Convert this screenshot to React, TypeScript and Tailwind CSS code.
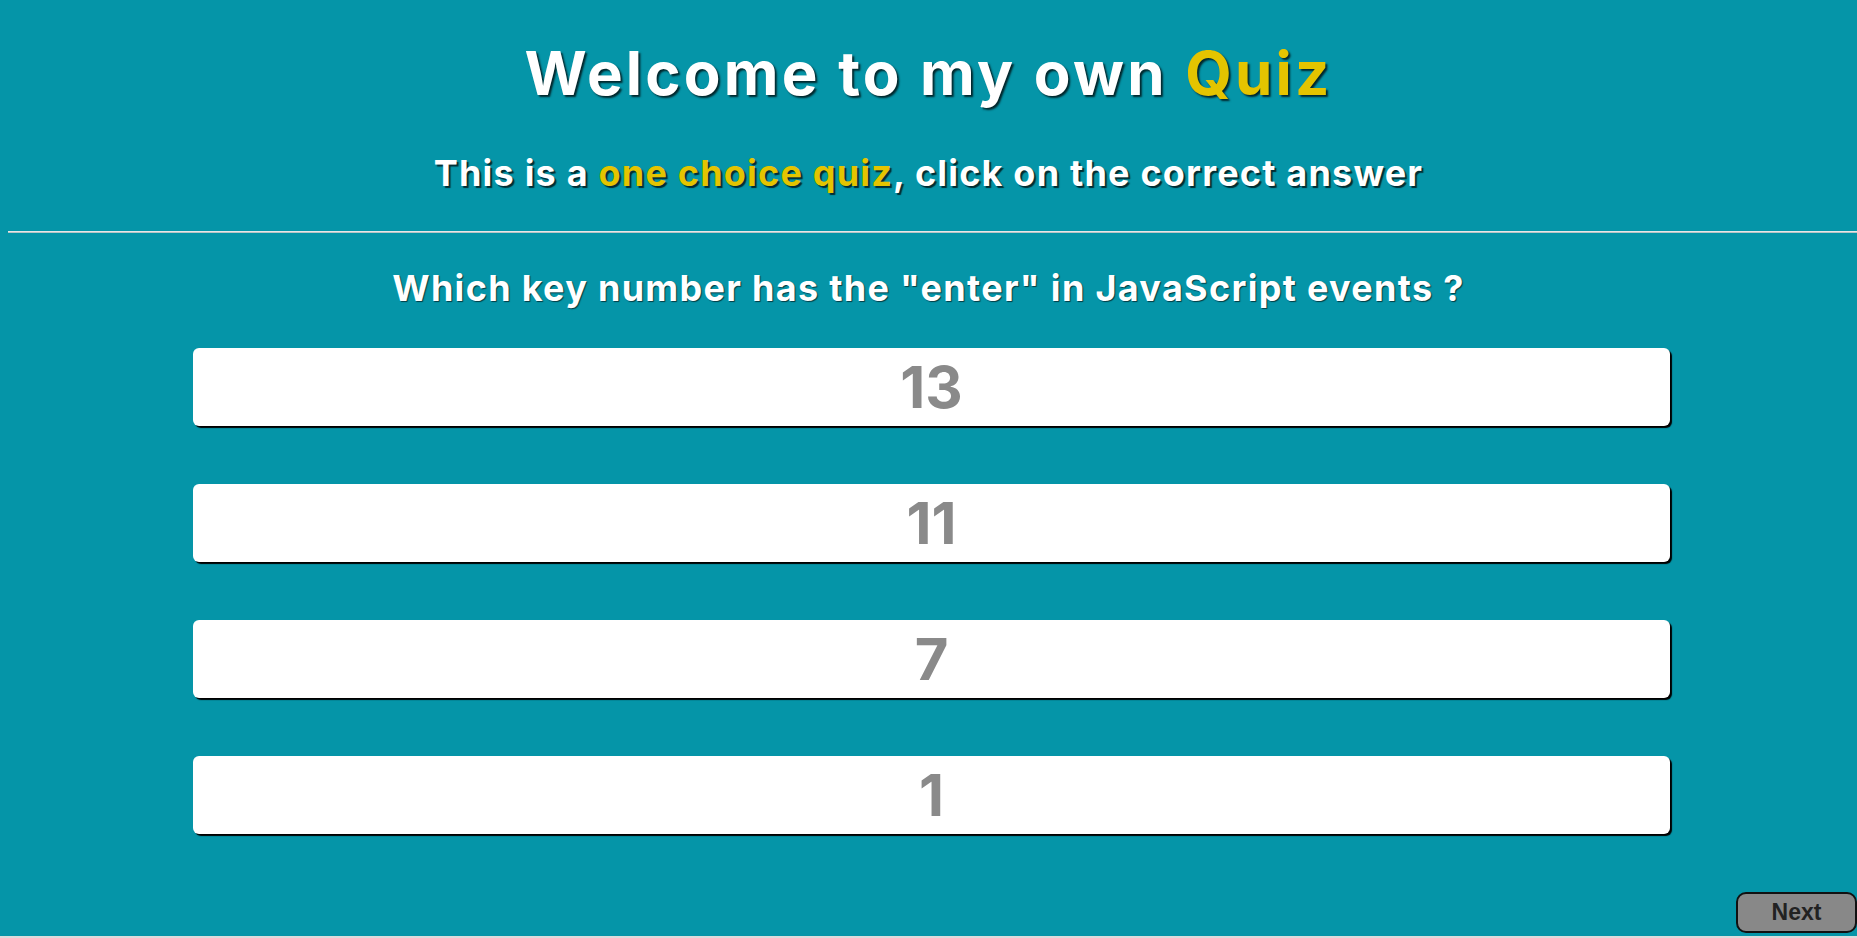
const answers = ['13', '11', '7', '1'];

export default function App() {
  return (
    <div className="w-[1857px] h-[938px] overflow-hidden bg-[#dcdcdc] font-['Inter','Open_Sans',sans-serif]">
      <div className="h-[936px] bg-[#0595a8] flex flex-col">
        <h1 className="mt-[43px] text-center text-[60px] leading-[60px] font-bold text-white tracking-[3.2px] [text-shadow:2px_2px_2px_rgba(0,0,0,0.75)]">
          Welcome to my own <span className="text-[#e4c400]">Quiz</span>
        </h1>
        <h2 className="mt-[52px] text-center text-[36px] leading-[36px] font-bold text-white tracking-[1.2px] [text-shadow:2px_2px_1px_rgba(0,0,0,0.7)]">
          This is a <span className="text-[#e4c400]">one choice quiz</span>, click on the correct answer
        </h2>
        <div className="mt-[40px] ml-2 h-[2px] border-t border-[#e8e8e8] bg-[#b8c4c6]" />
        <p className="mt-[37px] text-center text-[36px] leading-[36px] font-bold text-white tracking-[1.3px] [text-shadow:1px_1px_1px_rgba(0,0,0,0.6)]">
          Which key number has the "enter" in JavaScript events ?
        </p>
        <div className="mt-[42px] flex flex-col gap-[58px]">
          {answers.map((a) => (
            <button
              key={a}
              className="ml-[193px] w-[1477px] h-[78px] bg-white rounded-[6px] shadow-[2px_2px_1px_#000] flex items-center justify-center text-[58px] font-bold text-[#8a8a8a]"
            >
              {a}
            </button>
          ))}
        </div>
        <div className="mt-auto mb-[3px] flex justify-end">
          <button className="w-[121px] h-[41px] bg-[#888888] border-2 border-[#111] rounded-[10px] text-[23px] font-bold text-[#222] font-['Liberation_Sans',Arial,sans-serif]">
            Next
          </button>
        </div>
      </div>
    </div>
  );
}
